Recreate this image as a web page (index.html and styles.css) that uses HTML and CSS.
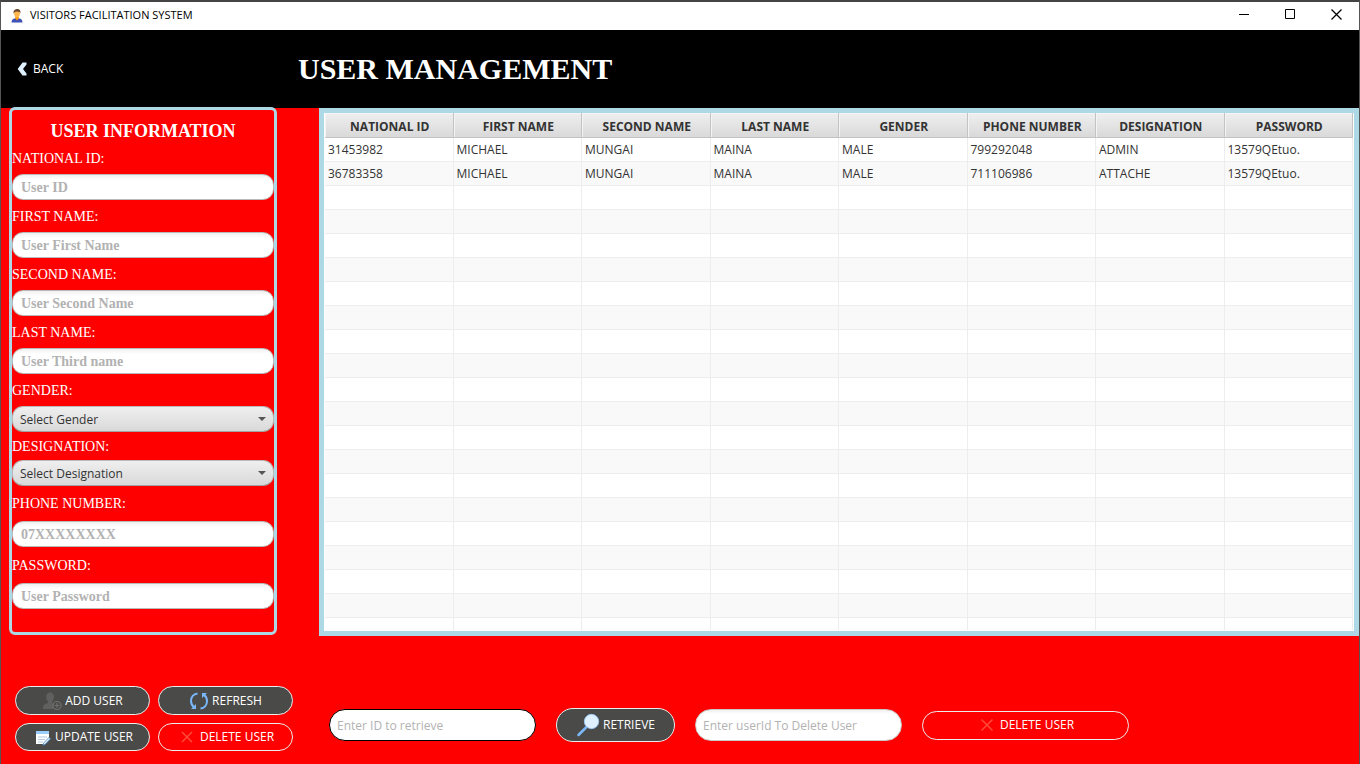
FILE: index.html
```html
<!DOCTYPE html>
<html lang="en">
<head>
<meta charset="utf-8">
<title>VISITORS FACILITATION SYSTEM</title>
<link rel="stylesheet" href="styles.css">
</head>
<body>
<div class="window">
  <div class="titlebar">
    <svg class="app-icon" viewBox="0 0 12 14" aria-hidden="true">
      <path d="M0.5 13.500c0-3 1.500-4 3.500-4.300h4c2 .3 3.500 1.300 3.500 4.300z" fill="#3f51b5"/>
      <path d="M4.300 7h3.400v2.500L6 11.500 4.300 9.500z" fill="#ff9800"/>
      <path d="M3 4c0-2 1.300-3 3-3s3 1 3 3c0 2.600-1.200 4.600-3 4.600S3 6.600 3 4z" fill="#ffb74d"/>
      <path d="M2.600 4.600C2 1.500 4 0 6.300 0 8.700 0 10 1.800 9.400 4.600L8.700 3 5 2.400 3.200 3.400z" fill="#6b4a33"/>
    </svg>
    <span class="app-name">VISITORS FACILITATION SYSTEM</span>
    <div class="window-controls">
      <button type="button" aria-label="Minimize"><svg viewBox="0 0 11 11"><path d="M0 5.500h10"/></svg></button>
      <button type="button" aria-label="Maximize"><svg viewBox="0 0 11 11"><path d="M.5.5h9v9h-9z"/></svg></button>
      <button type="button" aria-label="Close"><svg viewBox="0 0 11 11"><path d="M.5.5l10 10M10.500.5l-10 10" stroke-width="1.300"/></svg></button>
    </div>
  </div>

  <header class="header">
    <button type="button" class="back">
      <svg viewBox="0 0 10 14" aria-hidden="true"><path d="M5.500.5h4V2.500L6 7l3.500 4.500v2h-4L.7 7z" fill="#dff0fe"/></svg>
      BACK
    </button>
    <h1>USER MANAGEMENT</h1>
  </header>

  <main class="workspace">
    <form class="user-form" id="user-form">
      <h2>USER INFORMATION</h2>
      <div class="field"><label for="uid">NATIONAL ID:</label><input id="uid" type="text" placeholder="User ID"></div>
      <div class="field"><label for="first">FIRST NAME:</label><input id="first" type="text" placeholder="User First Name"></div>
      <div class="field"><label for="second">SECOND NAME:</label><input id="second" type="text" placeholder="User Second Name"></div>
      <div class="field"><label for="last">LAST NAME:</label><input id="last" type="text" placeholder="User Third name"></div>
      <div class="field"><label for="gender">GENDER:</label>
        <div class="combo"><select id="gender"><option>Select Gender</option><option>MALE</option><option>FEMALE</option></select></div></div>
      <div class="field tight"><label for="designation">DESIGNATION:</label>
        <div class="combo"><select id="designation"><option>Select Designation</option><option>ADMIN</option><option>ATTACHE</option></select></div></div>
      <div class="field roomy"><label for="phone">PHONE NUMBER:</label><input id="phone" type="text" placeholder="07XXXXXXXX"></div>
      <div class="field roomy"><label for="password">PASSWORD:</label><input id="password" type="text" placeholder="User Password"></div>
    </form>

    <div class="table-frame">
      <table>
        <thead>
          <tr><th>NATIONAL ID</th><th>FIRST NAME</th><th>SECOND NAME</th><th>LAST NAME</th><th>GENDER</th><th>PHONE NUMBER</th><th>DESIGNATION</th><th>PASSWORD</th></tr>
        </thead>
        <tbody>
          <tr><td>31453982</td><td>MICHAEL</td><td>MUNGAI</td><td>MAINA</td><td>MALE</td><td>799292048</td><td>ADMIN</td><td>13579QEtuo.</td></tr>
          <tr><td>36783358</td><td>MICHAEL</td><td>MUNGAI</td><td>MAINA</td><td>MALE</td><td>711106986</td><td>ATTACHE</td><td>13579QEtuo.</td></tr>
          <tr><td></td><td></td><td></td><td></td><td></td><td></td><td></td><td></td></tr>
          <tr><td></td><td></td><td></td><td></td><td></td><td></td><td></td><td></td></tr>
          <tr><td></td><td></td><td></td><td></td><td></td><td></td><td></td><td></td></tr>
          <tr><td></td><td></td><td></td><td></td><td></td><td></td><td></td><td></td></tr>
          <tr><td></td><td></td><td></td><td></td><td></td><td></td><td></td><td></td></tr>
          <tr><td></td><td></td><td></td><td></td><td></td><td></td><td></td><td></td></tr>
          <tr><td></td><td></td><td></td><td></td><td></td><td></td><td></td><td></td></tr>
          <tr><td></td><td></td><td></td><td></td><td></td><td></td><td></td><td></td></tr>
          <tr><td></td><td></td><td></td><td></td><td></td><td></td><td></td><td></td></tr>
          <tr><td></td><td></td><td></td><td></td><td></td><td></td><td></td><td></td></tr>
          <tr><td></td><td></td><td></td><td></td><td></td><td></td><td></td><td></td></tr>
          <tr><td></td><td></td><td></td><td></td><td></td><td></td><td></td><td></td></tr>
          <tr><td></td><td></td><td></td><td></td><td></td><td></td><td></td><td></td></tr>
          <tr><td></td><td></td><td></td><td></td><td></td><td></td><td></td><td></td></tr>
          <tr><td></td><td></td><td></td><td></td><td></td><td></td><td></td><td></td></tr>
          <tr><td></td><td></td><td></td><td></td><td></td><td></td><td></td><td></td></tr>
          <tr><td></td><td></td><td></td><td></td><td></td><td></td><td></td><td></td></tr>
          <tr><td></td><td></td><td></td><td></td><td></td><td></td><td></td><td></td></tr>
          <tr class="partial"><td></td><td></td><td></td><td></td><td></td><td></td><td></td><td></td></tr>
        </tbody>
      </table>
    </div>
  </main>

  <footer class="actions">
    <div class="form-actions">
      <button type="submit" form="user-form" class="pill">
        <svg class="icon" viewBox="0 0 20 20" aria-hidden="true">
          <path d="M8 1.500c2.500 0 3.900 1.700 3.900 4.300 0 2-.7 3.700-1.700 4.700v1.700l1.800.8a5 5 0 0 0-1 5H1c0-3.500.7-4.500 2.500-5.100l2.400-.8v-1.600C4.800 9.500 4.200 7.800 4.200 5.800 4.200 3.200 5.600 1.500 8 1.500z" fill="#606060"/>
          <circle cx="15" cy="14.500" r="4" fill="none" stroke="#707070" stroke-width="1.200"/>
          <path d="M15 12v5M12.500 14.500h5" stroke="#707070" stroke-width="1.200"/>
        </svg>ADD USER</button>
      <button type="button" class="pill">
        <svg class="icon" viewBox="0 0 20 20" aria-hidden="true">
          <g fill="none" stroke="#7ab8fb" stroke-width="2">
            <path d="M8.500 2.400C4.500 3 2 6.200 2 10c0 2.800 1.300 5 3.500 6.600"/>
            <path d="M11.500 17.600C15.500 17 18 13.800 18 10c0-2.800-1.300-5-3.500-6.600"/>
          </g>
          <path d="M2 18h5v-5zM18 2h-5v5z" fill="#7ab8fb"/>
        </svg>REFRESH</button>
      <button type="button" class="pill">
        <svg class="icon" viewBox="0 0 20 20" aria-hidden="true">
          <path d="M4 4h13v8l-5 5H4z" fill="#fff"/>
          <path d="M4 4h13v3H4z" fill="#98ccfd"/>
          <path d="M6 10h9M6 12.500h7M6 15h5" stroke="#b6cbe0"/>
          <path d="M17 10.500l1.500 1.300-5.300 5.500-2.300.9.700-2.300z" fill="#dff0fe" stroke="#4788c7" stroke-width=".8"/>
        </svg>UPDATE USER</button>
      <button type="button" class="pill danger">
        <svg class="icon" viewBox="0 0 20 20" aria-hidden="true"><path d="M5 5l10 10M15 5L5 15" stroke="#ff4a3a" stroke-width="1.500"/></svg>DELETE USER</button>
    </div>

    <div class="lookup">
      <input type="text" class="query focused" aria-label="Enter ID to retrieve" placeholder="Enter ID to retrieve">
      <button type="button" class="pill retrieve">
        <svg class="icon" viewBox="0 0 24 24" aria-hidden="true">
          <path d="M2.500 22L10 14.500" stroke="#7ab8fb" stroke-width="2.500" stroke-linecap="round"/>
          <circle cx="15.500" cy="8.500" r="7.200" fill="#dff0fe" stroke="#98ccfd" stroke-width=".8"/>
        </svg>RETRIEVE</button>
      <input type="text" class="query" aria-label="Enter userId To Delete User" placeholder="Enter userId To Delete User">
      <button type="button" class="pill danger remove">
        <svg class="icon" viewBox="0 0 20 20" aria-hidden="true"><path d="M4.500 4.500l11 11M15.500 4.500l-11 11" stroke="#ff4a3a" stroke-width="1.500"/></svg>DELETE USER</button>
    </div>
  </footer>
</div>
</body>
</html>
```
FILE: styles.css
```css
* { box-sizing: border-box; }

body {
  margin: 0;
  color: #333;
  font: 12px/16px "Open Sans", "Noto Sans", sans-serif;
}

button, input, select { font: inherit; }

button { cursor: pointer; }

.window {
  display: flex;
  flex-direction: column;
  min-height: 100vh;
  border: 1px solid #555;
  border-top: 2px solid #444;
  background: #f00;
}

.titlebar {
  display: flex;
  align-items: center;
  height: 28px;
  padding-left: 10px;
  background: #fff;
  color: #000;
}

.app-icon { width: 12px; height: 14px; margin-right: 7px; }

.app-name { margin-top: -2px; font-size: 11px; }

.window-controls { display: flex; height: 100%; margin-left: auto; }

.window-controls button {
  display: flex;
  align-items: center;
  justify-content: center;
  width: 46px;
  padding: 0 0 3px;
  border: 0;
  background: none;
}

.window-controls svg {
  width: 11px;
  height: 11px;
  fill: none;
  stroke: #000;
}

.header {
  display: flex;
  align-items: center;
  height: 78px;
  background: #000;
  color: #fff;
}

.back {
  display: flex;
  align-items: center;
  gap: 6px;
  width: 297px;
  padding: 0 0 0 16px;
  border: 0;
  background: none;
  color: inherit;
}

.back svg { width: 10px; height: 14px; }

h1, h2 { margin: 0; font-family: "Liberation Serif", serif; font-weight: bold; }

h1 { font-size: 30px; line-height: 36px; }

.workspace {
  display: grid;
  grid-template-columns: 268px 1fr;
  gap: 42px;
  padding-left: 8px;
}

.user-form {
  margin: -1px 0 1px;
  border: 3px solid #add8e6;
  border-radius: 6px;
  padding: 9px 0 15px;
  color: #fff;
  font-family: "Liberation Serif", serif;
}

h2 {
  margin-bottom: 5px;
  font-size: 18px;
  line-height: 24px;
  text-align: center;
}

.field { display: grid; gap: 4px; margin-bottom: 6px; }

.field label { font-size: 14px; line-height: 22px; }

.field.tight { gap: 2px; margin: -2px 0 7px; }

.field.roomy { gap: 6px; margin-bottom: 8px; }

.field input,
.combo select {
  width: 100%;
  height: 26px;
  border: 1px solid #bababa;
  border-radius: 11px;
  padding: 0 8px;
}

.field input {
  padding-top: 1px;
  background: linear-gradient(#f0f0f0, #fff 5px);
  color: #333;
  font-size: 14px;
  font-weight: bold;
}

input::placeholder { color: #b2b2b2; opacity: 1; }

.combo { position: relative; }

.combo select {
  display: block;
  appearance: none;
  padding: 0 24px 0 7px;
  border-bottom-color: #a3a3a3;
  background: linear-gradient(#efefef, #d9d9d9);
  color: #333;
  font: 12px "Open Sans", "Noto Sans", sans-serif;
}

.combo::after {
  content: "";
  position: absolute;
  top: 11px;
  right: 8px;
  border: 4px solid transparent;
  border-top-color: #555;
  border-bottom: 0;
  pointer-events: none;
}

.table-frame {
  border: 5px solid #add8e6;
  background: #fff;
  padding: 0 1px 1px;
}

table {
  width: 100%;
  border-collapse: separate;
  border-spacing: 0;
  table-layout: fixed;
}

th, td { padding: 0 3px; white-space: nowrap; }

th {
  height: 25px;
  padding: 3px 2px 0 4px;
  border: 1px solid #c3c3c3;
  border-width: 0 1px 1px 0;
  background: linear-gradient(#efefef, #d9d9d9);
  box-shadow: inset 1px 1px #f4f4f4;
  font-weight: bold;
}

td {
  height: 24px;
  border: 1px solid #ededed;
  border-width: 0 1px 1px 0;
}

tbody tr:nth-child(even) { background: #f9f9f9; }

.partial td { height: 12px; border-bottom: 0; }

.actions {
  display: flex;
  gap: 36px;
  padding: 50px 20px 13px 14px;
}

.form-actions {
  display: grid;
  grid-template-columns: 135px 135px;
  gap: 8px;
}

.pill {
  display: flex;
  align-items: center;
  justify-content: center;
  gap: 3px;
  height: 29px;
  padding: 0;
  border: 1px solid #ececec;
  border-radius: 17px;
  background: #4a4a48;
  color: #fff;
}

.form-actions .pill:nth-child(n + 3) { height: 28px; }

.pill.danger { background: #f00; }

.icon { width: 20px; height: 20px; }

.lookup {
  display: flex;
  flex: 1;
  align-items: center;
  gap: 20px;
  height: 34px;
  margin-top: 22px;
}

.query {
  width: 207px;
  height: 32px;
  border: 1px solid #c8c8c8;
  border-radius: 16px;
  padding: 0 7px;
  background: linear-gradient(#f0f0f0, #fff 4px);
  color: #333;
}

.query.focused { border-color: #000; background: #fff; }

.retrieve { width: 119px; height: 34px; }

.retrieve .icon { width: 24px; height: 24px; }

.remove { width: 207px; }
```
